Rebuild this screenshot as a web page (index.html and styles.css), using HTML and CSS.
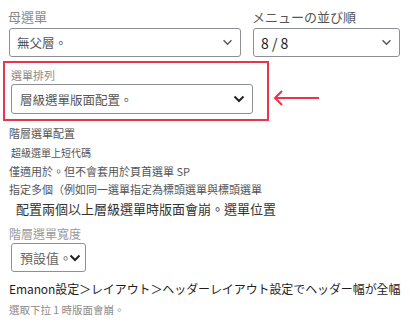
FILE: index.html
```html
<!DOCTYPE html>
<html lang="zh-Hant">
<head>
    <meta charset="UTF-8">
    <meta name="viewport" content="width=device-width, initial-scale=1.0">
    <title>選單設定</title>
    <link rel="stylesheet" href="styles.css">
</head>
<body>
    <div class="panel">
        <div class="top-row">
            <div class="field">
                <div class="field-label">母選單</div>
                <div class="select">
                    <span class="select-value">無父層。</span>
                    <svg class="chevron" viewBox="0 0 12 8"><path d="M1.5 1.5 L6 6 L10.5 1.5"/></svg>
                </div>
            </div>
            <div class="field">
                <div class="field-label dark">メニューの並び順</div>
                <div class="select">
                    <span class="select-value num">8 / 8</span>
                    <svg class="chevron" viewBox="0 0 12 8"><path d="M1.5 1.5 L6 6 L10.5 1.5"/></svg>
                </div>
            </div>
        </div>

        <div class="highlight-row">
            <div class="highlight">
                <div class="field-label small">選單排列</div>
                <div class="select tall">
                    <span class="select-value">層級選單版面配置。</span>
                    <svg class="chevron bold" viewBox="0 0 12 8"><path d="M1.5 1.5 L6 6 L10.5 1.5"/></svg>
                </div>
            </div>
            <svg class="arrow" viewBox="0 0 48 18"><path d="M47 9 H3 M10 2 L3 9 L10 16"/></svg>
        </div>

        <div class="notes">
            <div class="note">階層選單配置</div>
            <div class="note tiny">超級選單上短代碼</div>
            <div class="note">僅適用於。但不會套用於頁首選單 SP</div>
            <div class="note">指定多個（例如同一選單指定為標頭選單與標頭選單</div>
            <div class="note big">配置兩個以上層級選單時版面會崩。選單位置</div>
        </div>

        <div class="field width-field">
            <div class="field-label light">階層選單寬度</div>
            <div class="select narrow">
                <span class="select-value">預設值。</span>
                <svg class="chevron bold" viewBox="0 0 12 8"><path d="M1.5 1.5 L6 6 L10.5 1.5"/></svg>
            </div>
        </div>

        <p class="help">Emanon設定＞レイアウト＞ヘッダーレイアウト設定でヘッダー幅が全幅</p>
        <p class="help muted">選取下拉 1 時版面會崩。</p>
    </div>
</body>
</html>
```

FILE: styles.css
```css
body {
    margin: 0;
    padding: 0;
    background-color: #fff;
    color: #1e1e1e;
    font-family: 'Noto Sans CJK TC', 'Noto Sans CJK JP', 'Noto Sans', sans-serif;
}

.panel {
    padding: 8px 10px 0 9px;
}

.top-row {
    display: grid;
    grid-template-columns: 232px 147px;
    column-gap: 12px;
}

.field-label {
    font-size: 13px;
    line-height: 18px;
    color: #8a8a8a;
    margin-bottom: 2px;
    margin-left: -1px;
}

.field-label.dark {
    color: #555;
}

.field-label.small {
    font-size: 11px;
    line-height: 17px;
    color: #8a8a8a;
    margin: 0;
}

.field-label.light {
    font-size: 12px;
    line-height: 16px;
    color: #9a9a9a;
    margin: 0;
}

.select {
    display: flex;
    align-items: center;
    justify-content: space-between;
    height: 29px;
    box-sizing: border-box;
    border: 1px solid #8c8f94;
    border-radius: 3px;
    padding: 0 7px 0 7px;
}

.select.tall {
    height: 30px;
    padding: 0 7px 0 8px;
}

.select.narrow {
    width: 75px;
    margin-left: 2px;
    justify-content: flex-start;
    padding: 0 4px 0 8px;
}

.select-value {
    font-size: 12.5px;
    color: #555;
}

.select-value.num {
    font-size: 14px;
    color: #222;
}

.narrow .select-value {
    font-size: 13px;
    color: #666;
}

.chevron {
    width: 11px;
    height: 7px;
    fill: none;
    stroke: #555;
    stroke-width: 1.6;
}

.chevron.bold {
    width: 12px;
    height: 8px;
    stroke: #222;
    stroke-width: 2;
}

.narrow .chevron {
    margin-left: -3px;
}

.highlight-row {
    display: flex;
    align-items: flex-start;
    margin-top: 4px;
    margin-left: -6px;
}

.highlight {
    width: 266px;
    box-sizing: border-box;
    border: 2px solid #e8344c;
    padding: 4px 14px 5px 6px;
}

.arrow {
    width: 48px;
    height: 18px;
    margin-left: 3px;
    margin-top: 28px;
    fill: none;
    stroke: #e8344c;
    stroke-width: 2;
}

.notes {
    margin-top: 3px;
}

.note {
    font-size: 11px;
    line-height: 18px;
    color: #555;
}

.note.tiny {
    font-size: 10px;
    margin: 2px 0 0 2px;
}

.note.big {
    font-size: 13px;
    line-height: 22px;
    margin-left: 7px;
    color: #333;
}

.width-field {
    margin-top: 6px;
}

.width-field .select {
    margin-top: 1px;
}

.help {
    margin: 7px 0 0 0;
    font-size: 12px;
    line-height: 20px;
    color: #1e1e1e;
    white-space: nowrap;
    letter-spacing: -0.1px;
}

.help.muted {
    margin-top: 1px;
    font-size: 10.5px;
    color: #8a8a8a;
    letter-spacing: 0;
}
```
